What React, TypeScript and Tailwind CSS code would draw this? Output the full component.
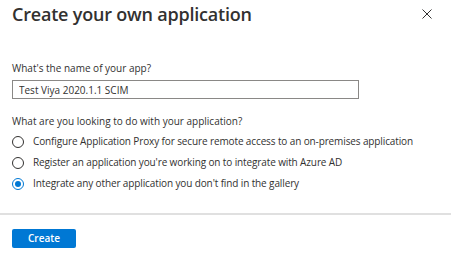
import React, { useState } from 'react'

const options = [
  'Configure Application Proxy for secure remote access to an on-premises application',
  "Register an application you're working on to integrate with Azure AD",
  "Integrate any other application you don't find in the gallery",
]

export default function App() {
  const [name, setName] = useState('Test Viya 2020.1.1 SCIM')
  const [choice, setChoice] = useState(2)

  return (
    <div
      className="w-[451px] h-[263px] bg-white text-[#323130] overflow-hidden"
      style={{ fontFamily: '"Open Sans", "Noto Sans", sans-serif' }}
    >
      {/* header */}
      <div className="flex items-start justify-between pl-3 pr-[19px] pt-[1px]">
        <h1 className="text-[18px] leading-[26px] font-semibold tracking-[-0.2px]">Create your own application</h1>
        <button className="mt-[8px]" title="Close">
          <svg width="10" height="10" viewBox="0 0 10 10">
            <path d="M0.5 0.5 L9.5 9.5 M9.5 0.5 L0.5 9.5" stroke="#323130" strokeWidth="1" />
          </svg>
        </button>
      </div>

      {/* body */}
      <div className="px-3 pt-[34px]">
        <label className="block text-[10px] leading-[14px]">What's the name of your app?</label>
        <input
          value={name}
          onChange={(e) => setName(e.target.value)}
          className="mt-[5px] block w-[347px] h-[19px] border border-[#8a8886] px-[6px] text-[10px] text-[#323130] outline-none"
        />

        <div className="mt-[15px] text-[10px] leading-[14px]">What are you looking to do with your application?</div>
        <div className="mt-[7px] flex flex-col gap-[8px]">
          {options.map((opt, i) => {
            const on = choice === i
            return (
              <label key={i} className="flex items-center gap-[9px] cursor-pointer text-[10px] leading-[13px] tracking-[-0.12px] whitespace-nowrap">
                <span
                  onClick={() => setChoice(i)}
                  className={
                    on
                      ? 'w-[12px] h-[12px] rounded-full border border-[#0078d4] flex items-center justify-center shrink-0'
                      : 'w-[12px] h-[12px] rounded-full border border-[#323130] shrink-0'
                  }
                >
                  {on && <span className="w-[6px] h-[6px] rounded-full bg-[#0078d4]" />}
                </span>
                <span onClick={() => setChoice(i)}>{opt}</span>
              </label>
            )
          })}
        </div>
      </div>

      {/* footer */}
      <div className="mt-[23px] h-[2px] bg-[#e0e0e0]" />
      <div className="px-3 pt-[14px]">
        <button className="block w-[64px] h-[19px] bg-[#0078d4] rounded-[2px] text-white text-[10px] font-semibold leading-[19px]">
          Create
        </button>
      </div>
    </div>
  )
}
